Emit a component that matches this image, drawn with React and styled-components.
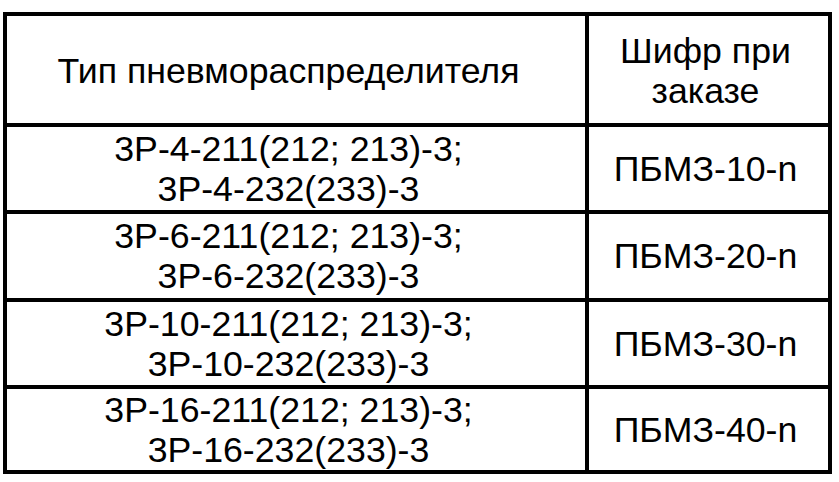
import React from "react";
import styled, { createGlobalStyle } from "styled-components";

const Global = createGlobalStyle`
  html, body { margin: 0; padding: 0; background: #fff; }
  body { font-family: "Liberation Sans", Arial, sans-serif; }
`;

const Page = styled.div`
  padding: 12px 0 0 3px;
`;

const Table = styled.div`
  display: grid;
  grid-template-columns: 578px 239px;
  grid-template-rows: 107px 83px 84px 83px 81px;
  gap: 4px;
  padding: 4px;
  background: #000;
  width: max-content;
`;

const Cell = styled.div`
  background: #fff;
  display: flex;
  align-items: center;
  justify-content: center;
  text-align: center;
  color: #000;
  font-size: 35.7px;
  line-height: 40px;
  padding-right: ${(p) => (p.$wide ? "15px" : "6px")};
  padding-top: ${(p) => (p.$head ? "2px" : "0")};
`;

const rows = [
  ["3Р-4-211(212; 213)-3;", "3Р-4-232(233)-3", "ПБМЗ-10-n"],
  ["3Р-6-211(212; 213)-3;", "3Р-6-232(233)-3", "ПБМЗ-20-n"],
  ["3Р-10-211(212; 213)-3;", "3Р-10-232(233)-3", "ПБМЗ-30-n"],
  ["3Р-16-211(212; 213)-3;", "3Р-16-232(233)-3", "ПБМЗ-40-n"],
];

export default function App() {
  return (
    <Page>
      <Global />
      <Table>
        <Cell $wide $head>Тип пневмораспределителя</Cell>
        <Cell $head>
          Шифр при
          <br />
          заказе
        </Cell>
        {rows.map(([a, b, c]) => (
          <React.Fragment key={c}>
            <Cell $wide>
              {a}
              <br />
              {b}
            </Cell>
            <Cell>{c}</Cell>
          </React.Fragment>
        ))}
      </Table>
    </Page>
  );
}
